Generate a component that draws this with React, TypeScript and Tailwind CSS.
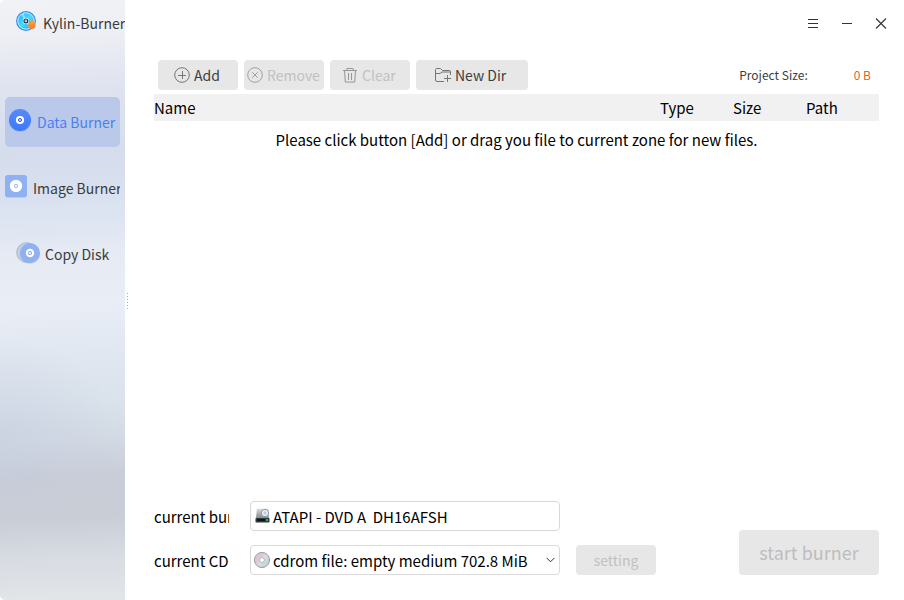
import type { ReactNode } from "react";

function AppLogo() {
  return (
    <svg width="22" height="22" viewBox="0 0 22 22" className="shrink-0">
      <defs>
        <linearGradient id="disc" x1="0" y1="0" x2="1" y2="1">
          <stop offset="0" stopColor="#19a5fb" />
          <stop offset="0.5" stopColor="#42dcff" />
          <stop offset="1" stopColor="#158df2" />
        </linearGradient>
        <linearGradient id="flame" x1="0" y1="0" x2="0" y2="1">
          <stop offset="0" stopColor="#ffb12e" />
          <stop offset="1" stopColor="#f57a32" />
        </linearGradient>
      </defs>
      <circle cx="10" cy="10" r="9.3" fill="url(#disc)" stroke="#4387ee" strokeWidth="1.3" />
      <circle cx="10" cy="10" r="8.2" fill="none" stroke="#b5efff" strokeWidth="1" />
      <path d="M10 10 4.8 3.8a8 8 0 0 1 3-1.7zM10 10l5.8 5.6-3 1.7z" fill="#a8f3ff" opacity=".65" />
      <path d="M15.2 6.4c.4 2.4-1.2 3.6-1.9 5.4-.4 1.2-.9 1.8-1.8 2.3.6 1.9 1.6 3.6 4.1 4 2.4.1 4.1-1.5 4-3.6-.1-1.5-1-2.2-1.1-3.5-.7.4-1.1.8-1.2 1.5-.5-1.8-.2-4.4-2.1-6.1z" fill="url(#flame)" />
      <circle cx="9.9" cy="9.9" r="3.1" fill="#fff" opacity=".9" />
      <circle cx="9.9" cy="9.9" r="1.9" fill="#fff" stroke="#173346" strokeWidth="1.2" />
      <circle cx="9.9" cy="9.9" r=".6" fill="#173346" />
    </svg>
  );
}

function DataDisc() {
  return (
    <svg width="24" height="26" viewBox="0 0 24 26" className="shrink-0">
      <defs>
        <linearGradient id="blue" x1="0" y1="0" x2="0" y2="1">
          <stop offset="0" stopColor="#578bf8" />
          <stop offset="1" stopColor="#3b78fb" />
        </linearGradient>
      </defs>
      <circle cx="12" cy="12.8" r="11.2" fill="#3974e8" opacity=".2" />
      <circle cx="12" cy="12" r="11" fill="url(#blue)" />
      <circle cx="12" cy="12" r="4.1" fill="#fff" />
      <circle cx="12" cy="12" r="1.6" fill="#b5c8fb" stroke="#4863b5" strokeWidth="1" />
    </svg>
  );
}

function ImageDisc() {
  return (
    <svg width="22" height="24" viewBox="0 0 22 24" className="shrink-0">
      <rect y="1" width="22" height="22" rx="3" fill="#7798dc" opacity=".3" />
      <rect width="22" height="22" rx="3" fill="#8fb0f3" />
      <circle cx="11" cy="11" r="6.2" fill="#fff" />
      <circle cx="11" cy="11" r="1.7" fill="#e4edff" stroke="#96b5f6" strokeWidth=".9" />
    </svg>
  );
}

function CopyDisc() {
  return (
    <svg width="25" height="24" viewBox="0 0 25 24" className="shrink-0">
      <circle cx="10.5" cy="10.5" r="9.8" fill="#c4cedf" stroke="#a7b8d8" strokeWidth="1" />
      <circle cx="14" cy="12" r="10" fill="#7798dc" opacity=".3" />
      <circle cx="14" cy="11" r="10" fill="#8fb0f3" />
      <circle cx="14" cy="11" r="4.2" fill="#fff" />
      <circle cx="14" cy="11" r="1.7" fill="#e4edff" stroke="#89a8e8" strokeWidth=".9" />
    </svg>
  );
}

function CircleIcon({ remove = false }: { remove?: boolean }) {
  return (
    <svg width="16" height="16" viewBox="0 0 16 16" fill="none" stroke={remove ? "#a0a0a0" : "#757575"} strokeWidth="1" className="shrink-0">
      <circle cx="8" cy="8" r="7.3" />
      <path d={remove ? "m5.2 5.2 5.6 5.6m0-5.6-5.6 5.6" : "M4 8.5h8M8.5 4v8"} />
    </svg>
  );
}

function TrashIcon() {
  return (
    <svg width="16" height="16" viewBox="0 0 16 16" fill="none" stroke="#969696" className="shrink-0">
      <path d="M1 3.5h14M4.5 3.5l.5-2h6l.5 2M2.5 3.5l.8 11.5h9.4l.8-11.5M6.5 6v7M9.5 6v7" />
    </svg>
  );
}

function FolderIcon() {
  return (
    <svg width="17" height="16" viewBox="0 0 17 16" fill="none" stroke="#757575" className="shrink-0">
      <path d="M9 14.5H2A1.5 1.5 0 0 1 .5 13V2.5a1 1 0 0 1 1-1H5.5l2 2H14.5a1 1 0 0 1 1 1v3.500M.5 6.500H5l2-1.500h8.500M9 11.500h7M12.500 8v7" />
    </svg>
  );
}

function DriveIcon() {
  return (
    <svg width="16" height="16" viewBox="0 0 16 16" className="shrink-0">
      <defs>
        <linearGradient id="drive" x1="0" y1="0" x2="0" y2="1">
          <stop offset="0" stopColor="#dadada" />
          <stop offset="1" stopColor="#808585" />
        </linearGradient>
      </defs>
      <path d="M1.800 1.500Q1.900.8 2.700.8H12.500q.8 0 .9.700L14 10.500H1z" fill="url(#drive)" />
      <circle cx="10" cy="5" r="3.700" fill="#e8f0f7" stroke="#8093a6" strokeWidth=".9" />
      <circle cx="10" cy="5" r="1.100" fill="#fff" stroke="#90a6ba" strokeWidth=".7" />
      <rect x=".5" y="10" width="14" height="4.500" rx=".7" fill="#303b40" />
      <path d="M2 12h8" stroke="#050909" strokeWidth="1.500" />
      <circle cx="12" cy="12" r="1.100" fill="#16dc22" />
    </svg>
  );
}

function CdIcon() {
  return (
    <svg width="17" height="17" viewBox="0 0 17 17" className="shrink-0">
      <defs>
        <linearGradient id="cd" x1="0" y1=".1" x2="1" y2=".9">
          <stop offset="0" stopColor="#cfd3d1" />
          <stop offset=".3" stopColor="#d9c6d5" />
          <stop offset=".52" stopColor="#e0dade" />
          <stop offset=".7" stopColor="#bfddd6" />
          <stop offset="1" stopColor="#d0c5d3" />
        </linearGradient>
      </defs>
      <circle cx="8" cy="8" r="7.600" fill="url(#cd)" stroke="#a09d9f" />
      <circle cx="8" cy="8" r="2.400" fill="#fff" stroke="#bbb5bc" strokeWidth="1" />
    </svg>
  );
}

function ToolButton({ className, children }: { className: string; children: ReactNode }) {
  return <button className={`flex h-[30px] items-center rounded bg-[#e7e7e7] text-[14px] leading-[20px] whitespace-nowrap ${className}`}>{children}</button>;
}

export default function App() {
  return (
    <div className="flex h-[600px] w-[904px] overflow-hidden bg-white font-['Noto_Sans_CJK_SC',sans-serif] text-[15px] leading-[22px] text-black">
      <aside className="h-full w-[125px] shrink-0 overflow-hidden rounded-l-[5px] bg-[radial-gradient(ellipse_120px_90px_at_0px_430px,rgba(190,200,222,0.4),rgba(190,200,222,0)),linear-gradient(178deg,#f1f2f5_0%,#edeff4_6%,#dfe3ef_15%,#d5dded_25%,#d9e1f0_33%,#e5eaf3_42%,#e8edf6_51%,#e1e7f0_59%,#dae2eb_67%,#d3dae4_73%,#c9cdd8_79%,#c9cdd6_86%,#d8dce3_93%,#e1e5e8_99%)] text-[14px] text-[#3b3b3b]">
        <header className="flex h-[47px] items-start pt-[11px] pl-4">
          <AppLogo />
          <span className="mt-[2px] ml-[5px] leading-[20px] whitespace-nowrap">Kylin-Burner</span>
        </header>
        <nav className="mt-[50px] flex flex-col gap-4 px-[5px]">
          <div className="flex h-[50px] items-center rounded-[5px] bg-[#bac9e9] text-[#4a7ff2]">
            <div className="ml-[3px] flex pb-[2px]"><DataDisc /></div>
            <span className="ml-[5px] whitespace-nowrap">Data Burner</span>
          </div>
          <div className="flex h-[50px] items-center overflow-hidden">
            <div className="flex shrink-0 pb-[2px]"><ImageDisc /></div>
            <span className="ml-[6px] whitespace-nowrap">Image Burner</span>
          </div>
          <div className="flex h-[50px] items-center">
            <div className="ml-[11px] flex"><CopyDisc /></div>
            <span className="ml-1 whitespace-nowrap">Copy Disk</span>
          </div>
        </nav>
      </aside>
      <div className="flex w-[5px] shrink-0 flex-col items-center gap-[2px] pt-[293px]">
        {Array.from({ length: 6 }, (_, i) => <i key={i} className="h-px w-px bg-[#aaa]" />)}
      </div>
      <main className="flex h-full w-[774px] flex-col pr-[25px] pl-6">
        <header className="flex h-[47px] shrink-0 items-center justify-end">
          <svg width="80" height="12" viewBox="0 0 80 12" className="-mr-2" fill="none" stroke="#333">
            <path d="M1 1.500h10M1 5.500h10M1 9.500h10M35 5.500h10" />
            <path d="m69 .5 10 10M79 .5 69 10.500" strokeWidth="1.100" />
          </svg>
        </header>
        <div className="mt-[13px] flex h-[30px] shrink-0 items-center gap-[6px] pl-1 text-[#3d3d3d]">
          <ToolButton className="w-20 gap-1 pl-[16px]"><CircleIcon />Add</ToolButton>
          <ToolButton className="w-20 gap-1 pl-[3px] text-[#c1c1c1]"><CircleIcon remove />Remove</ToolButton>
          <ToolButton className="w-20 gap-1 pl-3 text-[#c1c1c1]"><TrashIcon />Clear</ToolButton>
          <ToolButton className="w-[112px] gap-[3px] pl-[19px]"><FolderIcon />New Dir</ToolButton>
          <span className="ml-auto text-[12px]">Project Size:</span>
          <span className="mr-2 ml-[40px] text-[12px] text-[#e55f2b]">0 B</span>
        </div>
        <div className="mt-1 grid h-[27px] shrink-0 grid-cols-[506px_73px_73px_73px] items-center bg-[#f1f1f1]">
          <span>Name</span><span>Type</span><span>Size</span><span>Path</span>
        </div>
        <div className="min-h-0 flex-1 pt-[8px] text-center">Please click button [Add] or drag you file to current zone for new files.</div>
        <footer className="mb-[25px] flex h-[74px] shrink-0 items-end">
          <div className="flex flex-col gap-[14px]">
            <div className="flex h-[30px] items-center">
              <span className="mr-[21px] w-[75px] overflow-hidden pt-[2px] whitespace-nowrap">current burner</span>
              <div className="flex h-[30px] w-[310px] items-center rounded border border-[#d9d9d9] pl-1">
                <DriveIcon /><span className="ml-[2px] pt-[2px] whitespace-pre">ATAPI - DVD A  DH16AFSH</span>
              </div>
            </div>
            <div className="flex h-[30px] items-center">
              <span className="mr-5 w-[76px] pt-[2px] whitespace-nowrap">current CD</span>
              <div className="flex h-[30px] w-[310px] items-center rounded border border-[#d9d9d9] pl-[3px]">
                <CdIcon /><span className="ml-[2px] pt-[2px] whitespace-nowrap">cdrom file: empty medium 702.8 MiB</span>
                <svg width="9" height="6" viewBox="0 0 9 6" className="mr-1 ml-auto" fill="none" stroke="#333"><path d="m.5.8 4 4 4-4" /></svg>
              </div>
            </div>
          </div>
          <button className="ml-4 h-[30px] w-20 rounded bg-[#e7e7e7] text-[14px] text-[#c1c1c1]">setting</button>
          <button className="ml-auto h-[45px] w-[140px] rounded bg-[#e7e7e7] pb-[2px] text-[18px] text-[#bdbdbd]">start burner</button>
        </footer>
      </main>
    </div>
  );
}
